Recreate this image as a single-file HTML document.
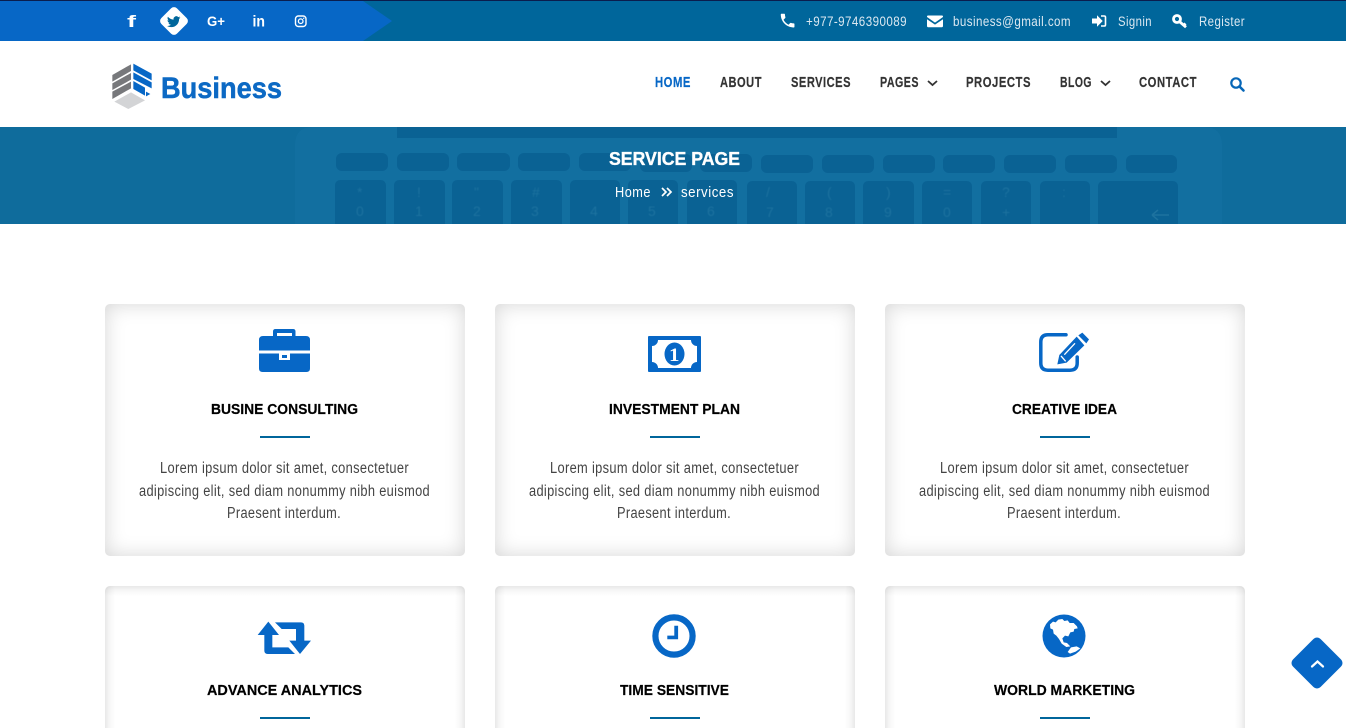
<!DOCTYPE html>
<html lang="en"><head><meta charset="utf-8"><title>Service Page</title>
<style>
html,body{margin:0;padding:0;background:#fff;width:1346px;height:728px;overflow:hidden}
#wrap{position:relative;width:1346px;height:728px;overflow:hidden;background:#fff}
.card{position:absolute;width:360px;height:252px;box-sizing:border-box;border-radius:5px;background:#fff;box-shadow:inset 0 0 20px rgba(0,0,0,.17)}
.low{position:absolute;width:360px;height:142px;top:586px;border-radius:5px 5px 0 0;background:
linear-gradient(to bottom,rgba(0,0,0,.09),rgba(0,0,0,.04) 4px,rgba(0,0,0,0) 10px),
linear-gradient(to right,rgba(0,0,0,.09),rgba(0,0,0,.04) 4px,rgba(0,0,0,0) 10px),
linear-gradient(to left,rgba(0,0,0,.09),rgba(0,0,0,.04) 4px,rgba(0,0,0,0) 10px),#fff}
svg{position:absolute;left:0;top:0}
text{font-family:"Liberation Sans",Arial,sans-serif}
.t{font-size:13.5px;fill:#dbe8f1;letter-spacing:.5px}
.n{font-size:15px;font-weight:700;fill:#333;stroke:#333;stroke-width:.2px;letter-spacing:.7px}
.h{font-size:14.5px;font-weight:700;fill:#000;stroke:#000;stroke-width:.2px}
.p{font-size:15.5px;fill:#444;letter-spacing:.4px}
.b{font-size:15px;fill:#fff;letter-spacing:.6px}
.soc{fill:#fff;font-weight:700}
.k{fill:#1d729f;font-size:14px;filter:blur(.6px)}
</style></head><body>
<div id="wrap">
<div class="card" style="left:105px;top:304px"></div>
<div class="card" style="left:495px;top:304px"></div>
<div class="card" style="left:885px;top:304px"></div>
<div class="low" style="left:105px"></div>
<div class="low" style="left:495px"></div>
<div class="low" style="left:885px"></div>
<svg width="1346" height="728" viewBox="0 0 1346 728" xmlns="http://www.w3.org/2000/svg">
<!-- top bar -->
<rect width="1346" height="41" fill="#00669b"/>
<rect width="1346" height="1" fill="#0a1d4d"/>
<polygon points="0,1 363,1 392,21 363,41 0,41" fill="#0767c6"/>
<text class="soc" x="127" y="27" font-size="17" textLength="9" lengthAdjust="spacingAndGlyphs">f</text>
<rect x="163" y="10" width="22" height="22" rx="4" fill="#fff" transform="rotate(45 174 21)"/>
<path transform="translate(167 15) scale(.56)" fill="#00669b" d="M23.95 4.57a10 10 0 0 1-2.82.77 4.96 4.96 0 0 0 2.16-2.72c-.95.55-2 .95-3.12 1.18a4.92 4.92 0 0 0-8.39 4.48C7.69 8.1 4.07 6.13 1.64 3.16a4.82 4.82 0 0 0-.67 2.48c0 1.71.87 3.2 2.18 4.09a4.9 4.9 0 0 1-2.23-.62v.06a4.92 4.92 0 0 0 3.95 4.83 5 5 0 0 1-2.21.08 4.94 4.94 0 0 0 4.6 3.42A9.87 9.87 0 0 1 0 19.54a14 14 0 0 0 7.56 2.21c9.05 0 14-7.5 14-13.98 0-.21 0-.42-.02-.63a9.94 9.94 0 0 0 2.41-2.57z"/>
<text class="soc" x="207" y="26" font-size="13.500" textLength="18" lengthAdjust="spacingAndGlyphs">G+</text>
<text class="soc" x="252.500" y="26.500" font-size="15.500" textLength="12.500" lengthAdjust="spacingAndGlyphs">in</text>
<rect x="295.500" y="16" width="10.500" height="10.500" rx="2.800" fill="none" stroke="#fff" stroke-width="1.400"/>
<circle cx="300.700" cy="21.200" r="2.300" fill="none" stroke="#fff" stroke-width="1.300"/>
<circle cx="303.700" cy="18.300" r=".7" fill="#fff"/>
<path transform="translate(778.500 11.500) scale(.76)" fill="#fff" d="M6.6 10.8c1.4 2.8 3.8 5.1 6.6 6.6l2.2-2.2c.3-.3.7-.4 1-.2 1.1.4 2.3.6 3.6.6.6 0 1 .4 1 1V20c0 .6-.4 1-1 1C10.6 21 3 13.4 3 4c0-.6.4-1 1-1h3.5c.6 0 1 .4 1 1 0 1.3.2 2.5.6 3.6.1.3 0 .7-.2 1z"/>
<text class="t" x="806" y="26" textLength="101" lengthAdjust="spacingAndGlyphs">+977-9746390089</text>
<path fill="#fff" d="M927 17v-.5c0-.8.7-1 1.2-1h13.6c.6 0 1.2.3 1.2 1v.5l-8 5.6zM927 19.2V26c0 .7.5 1.2 1.2 1.2h13.6c.7 0 1.2-.5 1.2-1.2v-6.800l-8 5.400z"/>
<text class="t" x="953" y="26" textLength="118" lengthAdjust="spacingAndGlyphs">business@gmail.com</text>
<path fill="#fff" d="M1092 18.500h5v-3.200l5.700 5.700-5.700 5.700v-3.200h-5z"/>
<path fill="none" stroke="#fff" stroke-width="1.600" d="M1101 16h3.200c.8 0 1.300.5 1.300 1.300v7.400c0 .8-.5 1.300-1.300 1.300H1101"/>
<text class="t" x="1118" y="26" textLength="34" lengthAdjust="spacingAndGlyphs">Signin</text>
<circle cx="1177" cy="19" r="3.500" fill="none" stroke="#fff" stroke-width="2.800"/>
<path fill="none" stroke="#fff" stroke-width="2.800" d="M1179 21.200l7 6M1183.500 25.500l2-2"/>
<text class="t" x="1199" y="26" textLength="46" lengthAdjust="spacingAndGlyphs">Register</text>

<!-- logo -->
<g transform="translate(105 55) scale(.3333)">
<polygon fill="#77787b" points="22,60 78,28 78,48 22,80"/>
<polygon fill="#77787b" points="22,85 78,54 78,74 22,105"/>
<polygon fill="#77787b" points="22,110 78,80 78,100 22,132"/>
<polygon fill="#d3d4d6" points="28,140 78,112 120,136 70,162"/>
<polygon fill="#0767c6" points="85,26 140,56 140,76 85,46"/>
<polygon fill="#0767c6" points="85,52 140,82 140,100 85,72"/>
<polygon fill="#0767c6" points="85,78 120,98 120,122 85,102"/>
<polygon fill="#0767c6" points="123,110 136,117 123,124"/>
</g>
<text x="161" y="98" font-size="30" font-weight="700" fill="#0c69c4" stroke="#0c69c4" stroke-width=".5" textLength="121" lengthAdjust="spacingAndGlyphs">Business</text>

<!-- nav -->
<text class="n" x="655" y="87" textLength="36" lengthAdjust="spacingAndGlyphs" style="fill:#0767c6;stroke:#0767c6">HOME</text>
<text class="n" x="720" y="87" textLength="42" lengthAdjust="spacingAndGlyphs">ABOUT</text>
<text class="n" x="791" y="87" textLength="60" lengthAdjust="spacingAndGlyphs">SERVICES</text>
<text class="n" x="880" y="87" textLength="39" lengthAdjust="spacingAndGlyphs">PAGES</text>
<path d="M928 81l4.500 4 4.500-4" fill="none" stroke="#333" stroke-width="1.800"/>
<text class="n" x="966" y="87" textLength="65" lengthAdjust="spacingAndGlyphs">PROJECTS</text>
<text class="n" x="1060" y="87" textLength="32" lengthAdjust="spacingAndGlyphs">BLOG</text>
<path d="M1101 81l4.500 4 4.500-4" fill="none" stroke="#333" stroke-width="1.800"/>
<text class="n" x="1139" y="87" textLength="58" lengthAdjust="spacingAndGlyphs">CONTACT</text>
<circle cx="1236" cy="83" r="4.700" fill="none" stroke="#0767b8" stroke-width="2.200"/>
<path d="M1239.500 86.500l4 4" stroke="#0767b8" stroke-width="2.600" stroke-linecap="round"/>

<!-- banner -->
<rect y="127" width="1346" height="97" fill="#0f6c9c"/>
<path d="M295 224V145q0-18 18-18h891q18 0 18 18v79z" fill="#126fa0"/>
<g fill="#0a6294">
<rect x="397" y="127" width="720" height="11"/>
<rect x="336" y="153" width="52" height="18" rx="6"/><rect x="397" y="153" width="52" height="18" rx="6"/><rect x="457" y="153" width="53" height="18" rx="6"/><rect x="518" y="153" width="52" height="18" rx="6"/><rect x="579" y="153" width="52" height="18" rx="6"/><rect x="640" y="154" width="52" height="18" rx="6"/><rect x="700" y="154" width="52" height="18" rx="6"/><rect x="761" y="155" width="52" height="18" rx="6"/><rect x="822" y="155" width="52" height="18" rx="6"/><rect x="883" y="155" width="52" height="18" rx="6"/><rect x="943" y="155" width="52" height="18" rx="6"/><rect x="1004" y="155" width="52" height="18" rx="6"/><rect x="1065" y="155" width="52" height="18" rx="6"/><rect x="1126" y="155" width="51" height="18" rx="6"/>
<path d="M335 224v-38q0-6 6-6h39q6 0 6 6v38zM394 224v-38q0-6 6-6h39q6 0 6 6v38zM452 224v-38q0-6 6-6h39q6 0 6 6v38zM511 224v-38q0-6 6-6h39q6 0 6 6v38zM570 224v-38q0-6 6-6h38q6 0 6 6v38zM628 224v-38q0-6 6-6h38q6 0 6 6v38zM687 224v-38q0-6 6-6h38q6 0 6 6v38zM747 224v-37q0-6 6-6h38q6 0 6 6v37zM805 224v-37q0-6 6-6h38q6 0 6 6v37zM863 224v-37q0-6 6-6h39q6 0 6 6v37zM922 224v-37q0-6 6-6h38q6 0 6 6v37zM981 224v-37q0-6 6-6h38q6 0 6 6v37zM1040 224v-37q0-6 6-6h38q6 0 6 6v37zM1098 224v-37q0-6 6-6h68q6 0 6 6v37z"/>
</g>
<g class="k">
<text x="356" y="216">0</text><text x="415" y="216">1</text><text x="473" y="216">2</text><text x="531" y="216">3</text><text x="590" y="216">4</text><text x="648" y="216">5</text><text x="707" y="216">6</text><text x="766" y="217">7</text><text x="825" y="217">8</text><text x="884" y="217">9</text><text x="943" y="217">0</text><text x="1002" y="217">+</text>
<text x="357" y="197">*</text><text x="417" y="197">!</text><text x="474" y="197">"</text><text x="532" y="197">#</text><text x="766" y="197">/</text><text x="827" y="197">(</text><text x="886" y="197">)</text><text x="943" y="197">=</text><text x="1002" y="197">?</text><text x="1062" y="197">:</text>
</g>
<path d="M1152 215h17M1152 215l6-5M1152 215l6 5" stroke="#1d729f" stroke-width="1.500" fill="none"/>
<text x="609" y="165" font-size="18" font-weight="700" fill="#fff" stroke="#fff" stroke-width=".35" textLength="131" lengthAdjust="spacingAndGlyphs">SERVICE PAGE</text>
<text class="b" x="615" y="197" textLength="36" lengthAdjust="spacingAndGlyphs">Home</text>
<path d="M662 188l4 4-4 4M667 188l4 4-4 4" fill="none" stroke="#fff" stroke-width="1.700"/>
<text class="b" x="681" y="197" textLength="53" lengthAdjust="spacingAndGlyphs">services</text>

<!-- icons row 1 -->
<path fill="#0767c6" fill-rule="evenodd" d="M276 329h17q2.500 0 2.500 2.500v4.500h10.500q4 0 4 4v10.500h-51v-10.500q0-4 4-4h10v-4.500q0-2.500 2.500-2.500zM277 333v3h15v-3z"/>
<path fill="#0767c6" fill-rule="evenodd" d="M259 353.500h20v6.500h11v-6.500h20v15q0 3.500-3.500 3.500h-44q-3.500 0-3.500-3.500zM282 355v3h5v-3z"/>
<rect x="648" y="336" width="53" height="36" rx="1" fill="#0767c6"/>
<path fill="#fff" d="M658 340H691A6 6 0 0 0 697 346V362A6 6 0 0 0 691 368H658A6 6 0 0 0 652 362V346A6 6 0 0 0 658 340Z"/>
<ellipse cx="674.500" cy="354" rx="10" ry="11.500" fill="#0767c6"/>
<text x="669" y="361" font-size="19" font-weight="700" fill="#fff" style="font-family:'Liberation Serif',serif" textLength="10.500" lengthAdjust="spacingAndGlyphs">1</text>
<path fill="none" stroke="#0767c6" stroke-width="3.500" stroke-linecap="round" d="M1066 334.800h-18q-7.200 0-7.200 7.200v21q0 7.200 7.200 7.200h22q7.200 0 7.200-7.200v-6"/>
<g transform="translate(1025 320) scale(.3333)">
<path fill="#0767c6" d="M97 133L103 105L155 50L178 76L125 128Z"/>
<path fill="#0767c6" d="M160 46L172 38L192 58L184 70Z"/>
<path fill="none" stroke="#fff" stroke-width="4" d="M108 108L122 124M118 104L150 70"/>
</g>

<!-- titles row 1 -->
<text class="h" x="211" y="414" textLength="147" lengthAdjust="spacingAndGlyphs">BUSINE CONSULTING</text>
<text class="h" x="609" y="414" textLength="131" lengthAdjust="spacingAndGlyphs">INVESTMENT PLAN</text>
<text class="h" x="1012" y="414" textLength="105" lengthAdjust="spacingAndGlyphs">CREATIVE IDEA</text>
<rect x="260" y="436" width="50" height="2" fill="#00669b"/>
<rect x="650" y="436" width="50" height="2" fill="#00669b"/>
<rect x="1040" y="436" width="50" height="2" fill="#00669b"/>

<text class="p" x="160" y="473" textLength="249" lengthAdjust="spacingAndGlyphs">Lorem ipsum dolor sit amet, consectetuer</text>
<text class="p" x="139" y="496" textLength="291" lengthAdjust="spacingAndGlyphs">adipiscing elit, sed diam nonummy nibh euismod</text>
<text class="p" x="227" y="518" textLength="114" lengthAdjust="spacingAndGlyphs">Praesent interdum.</text>
<text class="p" x="550" y="473" textLength="249" lengthAdjust="spacingAndGlyphs">Lorem ipsum dolor sit amet, consectetuer</text>
<text class="p" x="529" y="496" textLength="291" lengthAdjust="spacingAndGlyphs">adipiscing elit, sed diam nonummy nibh euismod</text>
<text class="p" x="617" y="518" textLength="114" lengthAdjust="spacingAndGlyphs">Praesent interdum.</text>
<text class="p" x="940" y="473" textLength="249" lengthAdjust="spacingAndGlyphs">Lorem ipsum dolor sit amet, consectetuer</text>
<text class="p" x="919" y="496" textLength="291" lengthAdjust="spacingAndGlyphs">adipiscing elit, sed diam nonummy nibh euismod</text>
<text class="p" x="1007" y="518" textLength="114" lengthAdjust="spacingAndGlyphs">Praesent interdum.</text>

<!-- icons row 2 -->
<g transform="translate(245 610) scale(.3333)" fill="#0767c6">
<path d="M70 35L102 75H82V112H130L150 132H68Q58 132 58 122V75H38Z"/>
<path d="M90 37H168Q178 37 178 47V92H198L165 132L133 92H153V57H110Z"/>
</g>
<circle cx="674" cy="636" r="18.600" fill="none" stroke="#0767c6" stroke-width="6.200"/>
<path fill="#0767c6" d="M674.300 625.700h3.800v13.500h-10.800v-3.600h7z"/>
<circle cx="1064" cy="636" r="21.500" fill="#0767c6"/>
<g transform="translate(1025 605) scale(.3333)" fill="#fff">
<path d="M75 58L84 50L92 52L100 44L112 42L118 48L128 46L134 54L146 54L156 64L158 70L148 72L146 80L136 82L130 94L120 92L112 100L116 112L126 114L136 124L124 126L110 116L102 102L94 92L86 86L84 74L76 70Z"/>
<path d="M128 141L138 127L155 124L166 130L152 140L135 146Z"/>
</g>
<text class="h" x="207" y="695" textLength="155" lengthAdjust="spacingAndGlyphs">ADVANCE ANALYTICS</text>
<text class="h" x="620" y="695" textLength="109" lengthAdjust="spacingAndGlyphs">TIME SENSITIVE</text>
<text class="h" x="994" y="695" textLength="141" lengthAdjust="spacingAndGlyphs">WORLD MARKETING</text>
<rect x="260" y="717" width="50" height="2" fill="#00669b"/>
<rect x="650" y="717" width="50" height="2" fill="#00669b"/>
<rect x="1040" y="717" width="50" height="2" fill="#00669b"/>

<!-- back to top -->
<rect x="1297.500" y="643.500" width="39" height="39" rx="5" fill="#0767c6" transform="rotate(45 1317 663)"/>
<path d="M1312 666.500l5.500-5 5.500 5" fill="none" stroke="#fff" stroke-width="2.200" stroke-linecap="round"/>
</svg>
</div>
</body></html>
